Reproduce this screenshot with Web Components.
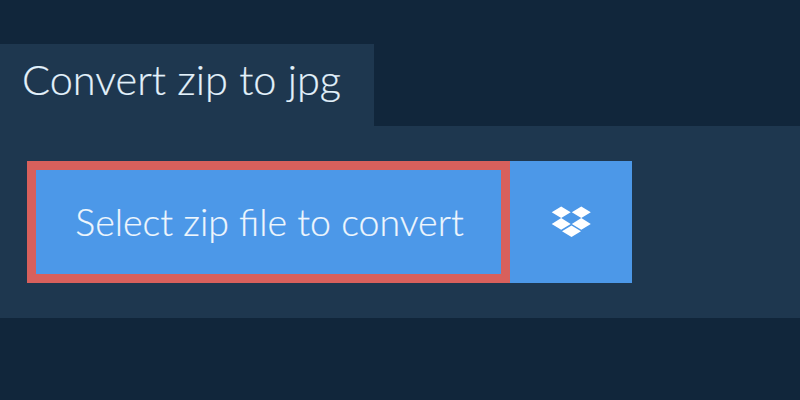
<!DOCTYPE html>
<html><head><meta charset="utf-8"><style>
html,body{margin:0;padding:0;background:#11263b;height:400px;overflow:hidden}
</style></head><body>
<template id="tab-t"><style>
:host{display:block;font-family:Lato,sans-serif}
.tab{box-sizing:border-box;width:374px;height:82px;margin-top:44px;background:#1e374f;color:#e3f1fb;font-size:41.500px;font-weight:300;-webkit-text-stroke:.2px #e3f1fb;line-height:70px;padding-left:22px;white-space:nowrap}
.panel{box-sizing:border-box;height:192px;background:#1e374f;padding:35px 27px}
</style><div class="tab"><slot name="title"></slot></div><div class="panel"><slot></slot></div></template>
<template id="btn-t"><style>
:host{display:flex;font-family:Lato,sans-serif;height:122px;width:605px}
.main{box-sizing:border-box;width:483px;border:9px solid #d8605c;background:#4c98e8;color:#eef6fd;font-size:37.500px;font-weight:300;-webkit-text-stroke:.2px #eef6fd;display:flex;align-items:center;justify-content:center;white-space:nowrap;padding:0 0 2px 2px}
.drop{width:122px;background:#4c98e8;display:flex;align-items:center;justify-content:center}
svg{display:block}
</style><div class="main"><slot></slot></div><div class="drop"><svg width="40" height="34" viewBox="0 0 40 34"><path fill="#fff" d="M10.200 1.500l9.500 5.800-9.500 5.800-9.500-5.800zM30.300 1.500l9.500 5.800-9.500 5.800-9.500-5.800zM10.200 13.100l9.500 5.800-9.500 5.800-9.500-5.800zM30.300 13.100l9.500 5.800-9.500 5.800-9.500-5.800zM20.500 20.400l9.500 5.800-9.500 5.800-9.500-5.800z"/></svg></div></template>
<convert-panel><span slot="title">Convert zip to jpg</span><upload-button>Select zip file to convert</upload-button></convert-panel>
<script>
class ConvertPanel extends HTMLElement{constructor(){super();this.attachShadow({mode:'open'}).appendChild(document.getElementById('tab-t').content.cloneNode(true))}}
class UploadButton extends HTMLElement{constructor(){super();this.attachShadow({mode:'open'}).appendChild(document.getElementById('btn-t').content.cloneNode(true))}}
customElements.define('convert-panel',ConvertPanel);
customElements.define('upload-button',UploadButton);
</script>
</body></html>
